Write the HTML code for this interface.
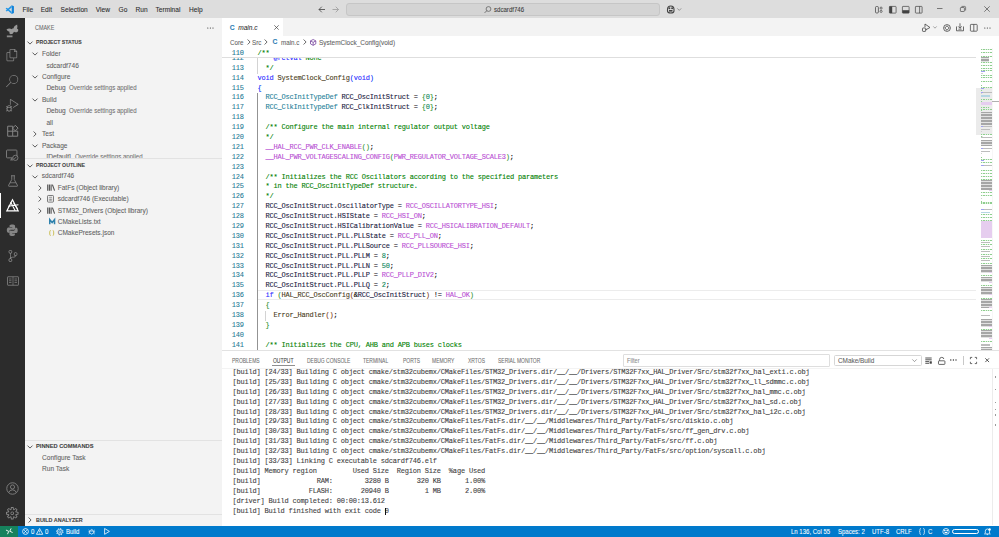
<!DOCTYPE html><html><head><meta charset="utf-8"><style>
html,body{margin:0;padding:0;}
body{width:999px;height:537px;overflow:hidden;position:relative;background:#fff;font-family:"Liberation Sans",sans-serif;}
.t{position:absolute;white-space:pre;-webkit-text-stroke:0.07px currentColor;}
.b{position:absolute;}
svg.b{overflow:visible;}
.code{position:absolute;white-space:pre;font-family:"Liberation Mono",monospace;-webkit-text-stroke:0.1px currentColor;}
</style></head><body>
<div class="b" style="left:0.00px;top:0.00px;width:999.00px;height:18.20px;background:#dddddd"></div>
<svg class="b" style="left:4.60px;top:4.80px;" width="9.40" height="9.20" viewBox="0 0 100 100"><path d="M72 3 L96 14 V86 L72 97 Z" fill="#1182d9"/><path d="M72 3 L72 27 L19 71 L6 63 Z" fill="#1f95e8"/><path d="M72 97 L72 73 L19 29 L6 37 Z" fill="#1f95e8"/></svg>
<div class="t" style="left:22.50px;top:4.00px;font-size:6.6px;line-height:12px;color:#2a2a2a;font-weight:normal;font-family:'Liberation Sans',sans-serif;">File</div>
<div class="t" style="left:40.70px;top:4.00px;font-size:6.6px;line-height:12px;color:#2a2a2a;font-weight:normal;font-family:'Liberation Sans',sans-serif;">Edit</div>
<div class="t" style="left:60.60px;top:4.00px;font-size:6.6px;line-height:12px;color:#2a2a2a;font-weight:normal;font-family:'Liberation Sans',sans-serif;">Selection</div>
<div class="t" style="left:95.80px;top:4.00px;font-size:6.6px;line-height:12px;color:#2a2a2a;font-weight:normal;font-family:'Liberation Sans',sans-serif;">View</div>
<div class="t" style="left:118.50px;top:4.00px;font-size:6.6px;line-height:12px;color:#2a2a2a;font-weight:normal;font-family:'Liberation Sans',sans-serif;">Go</div>
<div class="t" style="left:135.50px;top:4.00px;font-size:6.6px;line-height:12px;color:#2a2a2a;font-weight:normal;font-family:'Liberation Sans',sans-serif;">Run</div>
<div class="t" style="left:155.50px;top:4.00px;font-size:6.6px;line-height:12px;color:#2a2a2a;font-weight:normal;font-family:'Liberation Sans',sans-serif;">Terminal</div>
<div class="t" style="left:189.00px;top:4.00px;font-size:6.6px;line-height:12px;color:#2a2a2a;font-weight:normal;font-family:'Liberation Sans',sans-serif;">Help</div>
<svg class="b" style="left:318.00px;top:6.00px;" width="7.50" height="7.00" viewBox="0 0 7.5 7"><path d="M1 3.5 H7 M3.8 0.7 L1 3.5 L3.8 6.3" stroke="#424242" stroke-width="0.8" fill="none"/></svg>
<svg class="b" style="left:332.00px;top:6.00px;" width="7.50" height="7.00" viewBox="0 0 7.5 7"><path d="M0.5 3.5 H6.5 M3.7 0.7 L6.5 3.5 L3.7 6.3" stroke="#9a9a9a" stroke-width="0.8" fill="none"/></svg>
<div class="b" style="left:346.00px;top:3.10px;width:313.50px;height:12.70px;background:#d4d4d4;border:0.8px solid #c6c6c6;border-radius:3px;box-sizing:border-box"></div>
<svg class="b" style="left:484.00px;top:5.60px;" width="7.50" height="7.50" viewBox="0 0 7.5 7.5"><circle cx="4.5" cy="3" r="2.4" stroke="#555" stroke-width="0.7" fill="none"/><path d="M2.8 4.7 L0.6 6.9" stroke="#555" stroke-width="0.8"/></svg>
<div class="t" style="left:493.50px;top:3.70px;font-size:6.7px;line-height:12px;color:#3b3b3b;font-weight:normal;font-family:'Liberation Sans',sans-serif;transform:scaleX(0.91);transform-origin:0 0;">sdcardf746</div>
<svg class="b" style="left:666.00px;top:5.20px;" width="9.50" height="8.50" viewBox="0 0 9.5 8.5"><path d="M1.5 4.5 Q1.5 1 4.75 1 Q8 1 8 4.5 V6 Q8 8 4.75 8 Q1.5 8 1.5 6 Z" fill="none" stroke="#424242" stroke-width="1.1"/><circle cx="3.4" cy="3.2" r="1" fill="#424242"/><circle cx="6.1" cy="3.2" r="1" fill="#424242"/><rect x="3" y="5" width="3.5" height="1.6" fill="#424242"/></svg>
<svg class="b" style="left:677.00px;top:8.00px;" width="4.50" height="3.00" viewBox="0 0 4.5 3"><path d="M0.3 0.4 L2.25 2.4 L4.2 0.4" stroke="#616161" stroke-width="0.6" fill="none"/></svg>
<svg class="b" style="left:875.20px;top:5.90px;" width="7.80" height="7.50" viewBox="0 0 7.8 7.5"><rect x="0.5" y="0.5" width="2.9" height="6.5" rx="1" fill="none" stroke="#424242" stroke-width="0.75"/><circle cx="6.1" cy="2.1" r="1.05" fill="none" stroke="#424242" stroke-width="0.7"/><circle cx="6.1" cy="5.4" r="1.05" fill="none" stroke="#424242" stroke-width="0.7"/></svg>
<svg class="b" style="left:888.70px;top:5.90px;" width="7.50" height="7.50" viewBox="0 0 7.5 7.5"><rect x="0.4" y="0.4" width="6.7" height="6.7" rx="0.6" fill="none" stroke="#424242" stroke-width="0.7"/><rect x="0.4" y="0.4" width="2.8" height="6.7" fill="#424242"/></svg>
<svg class="b" style="left:902.00px;top:5.90px;" width="7.50" height="7.50" viewBox="0 0 7.5 7.5"><rect x="0.4" y="0.4" width="6.7" height="6.7" rx="0.6" fill="none" stroke="#424242" stroke-width="0.7"/><rect x="0.4" y="4.2" width="6.7" height="2.9" fill="#424242"/></svg>
<svg class="b" style="left:915.40px;top:5.90px;" width="7.50" height="7.50" viewBox="0 0 7.5 7.5"><rect x="0.4" y="0.4" width="6.7" height="6.7" rx="0.6" fill="none" stroke="#424242" stroke-width="0.7"/><path d="M4.6 0.4 V7.1" stroke="#424242" stroke-width="0.7"/></svg>
<svg class="b" style="left:936.50px;top:7.80px;" width="5.50" height="1.00" viewBox="0 0 5.5 1"><path d="M0 0.5 H5.5" stroke="#333" stroke-width="0.6"/></svg>
<svg class="b" style="left:959.70px;top:6.30px;" width="6.00" height="6.00" viewBox="0 0 6 6"><rect x="0.4" y="1.5" width="4" height="4" rx="0.6" fill="none" stroke="#333" stroke-width="0.6"/><path d="M1.5 0.4 H4.6 Q5.6 0.4 5.6 1.4 V4.5" fill="none" stroke="#333" stroke-width="0.6"/></svg>
<svg class="b" style="left:984.30px;top:6.20px;" width="6.00" height="6.00" viewBox="0 0 6 6"><path d="M0.3 0.3 L5.7 5.7 M5.7 0.3 L0.3 5.7" stroke="#333" stroke-width="0.6"/></svg>
<div class="b" style="left:0.00px;top:18.20px;width:25.00px;height:508.00px;background:#2c2c2c"></div>
<svg class="b" style="left:6.20px;top:23.50px;" width="13.50" height="14.50" viewBox="0 0 24 24"><g transform="rotate(-22 12 10)"><path d="M2 5 Q7 3.5 11.5 8 L12.5 6.5 L13.5 8 Q17.5 3 23 3.5 Q22.5 8 20 10 Q23 12.5 19.5 15.5 Q16 17 13 13.5 Q9.5 17 6 15.5 Q3 13.5 5.5 10.5 Q2.5 8.5 2 5Z" fill="#9a9a9a"/></g><rect x="1.5" y="19.5" width="10" height="3.2" fill="#8a8a8a"/></svg>
<svg class="b" style="left:6.40px;top:49.40px;" width="12.20" height="12.20" viewBox="0 0 24 24"><path fill-rule="evenodd" d="M17.5 0h-9L7 1.5V6H2.5L1 7.5v15.07L2.5 24h12.07L16 22.57V18h4.7l1.3-1.43V4.5L17.5 0zm0 2.12l2.38 2.38H17.5V2.12zm-3 20.38h-12v-15H7v9.07L8.5 18h6v4.5zm6-6h-12v-15H16V6h4.5v10.5z" fill="#858585"/></svg>
<svg class="b" style="left:6.40px;top:75.10px;" width="12.20" height="12.20" viewBox="0 0 24 24"><path fill-rule="evenodd" d="M15.25 0a8.75 8.75 0 0 0-6.64 14.444L0 23.05 1.06 24l8.59-8.616A8.75 8.75 0 1 0 15.25 0zm0 16.111a7.361 7.361 0 1 1 7.361-7.36 7.37 7.37 0 0 1-7.361 7.36z" fill="#858585"/></svg>
<svg class="b" style="left:6.25px;top:99.25px;" width="12.50" height="12.50" viewBox="0 0 24 24"><path fill-rule="evenodd" d="M10.94 13.5l-1.32 1.32a3.73 3.73 0 0 0-7.24 0L1.06 13.5 0 14.56l1.72 1.72-.22.22V18H0v1.5h1.5v.08c.077.489.214.966.41 1.42L0 22.94 1.06 24l1.650-1.65A4.308 4.308 0 0 0 6 24a4.31 4.31 0 0 0 3.29-1.65L10.94 24 12 22.94 10.09 21c.198-.464.336-.951.41-1.45v-.1H12V18h-1.5v-1.5l-.22-.22L12 14.560l-1.06-1.060zM6 13.5a2.25 2.25 0 0 1 2.25 2.25h-4.5A2.25 2.25 0 0 1 6 13.5zm3 6a3.33 3.33 0 0 1-3 3 3.33 3.33 0 0 1-3-3v-2.25h6v2.25zm14.76-9.9v1.26L13.5 17.37V15.6l8.5-5.37L9 2v9.46a5.07 5.07 0 0 0-1.5-.72V.63L8.64 0l15.12 9.6z" fill="#858585"/></svg>
<svg class="b" style="left:6.00px;top:123.00px;" width="14.00" height="15.00" viewBox="0 0 14 15"><path d="M1.7 3.2 H6.7 V13.2 H1.7 Z M1.7 8.2 H11.7 V13.2 H6.7" fill="none" stroke="#858585" stroke-width="1"/><path d="M9.3 1.7 L12.1 4.5 L9.3 7.3 L6.5 4.5 Z" transform="translate(0,0.6)" fill="none" stroke="#858585" stroke-width="1"/></svg>
<svg class="b" style="left:6.25px;top:149.25px;" width="12.50" height="12.50" viewBox="0 0 24 24"><rect x="1" y="2" width="20" height="15" rx="1.5" fill="none" stroke="#858585" stroke-width="1.7"/><path d="M8 21 H14 M11 17 V21" stroke="#858585" stroke-width="1.7"/><circle cx="18" cy="17" r="5" fill="#2c2c2c" stroke="#858585" stroke-width="1.6"/><path d="M15.8 19.2 L20.2 14.8" stroke="#858585" stroke-width="1.5"/></svg>
<svg class="b" style="left:6.50px;top:174.50px;" width="12.00" height="12.00" viewBox="0 0 24 24"><path d="M8 1.5 H16 M9.5 1.5 V9 L3 21 Q2.5 22.5 4 22.5 H20 Q21.5 22.5 21 21 L14.5 9 V1.5" fill="none" stroke="#858585" stroke-width="1.7"/><path d="M6 15.5 H18" stroke="#858585" stroke-width="1.5"/></svg>
<svg class="b" style="left:6.00px;top:199.00px;" width="13.00" height="13.00" viewBox="0 0 24 24"><path d="M12 1.5 L1.5 22 H22.5 Z" fill="none" stroke="#ffffff" stroke-width="2.2"/><path d="M4 13.5 L23 10.5 M8.5 5.5 L17 21.5 M14 8 L21.5 18" stroke="#ffffff" stroke-width="2"/></svg>
<svg class="b" style="left:6.25px;top:224.25px;" width="12.50" height="12.50" viewBox="0 0 24 24"><path d="M11.8 1C6.5 1 6.9 3.3 6.9 3.3V5.7H12V6.5H4.9C4.9 6.5 1.5 6.1 1.5 11.5C1.5 16.9 4.4 16.7 4.4 16.7H6.4V14.2C6.4 14.2 6.3 11.2 9.4 11.2H14.5C14.5 11.5 17.4 11.3 17.4 8.6V3.9C17.4 3.9 17.800 1 11.8 1Z M12.2 23C17.5 23 17.1 20.7 17.1 20.7V18.3H12V17.5H19.1C19.1 17.5 22.5 17.9 22.5 12.5C22.5 7.1 19.6 7.3 19.6 7.3H17.6V9.8C17.6 9.8 17.7 12.8 14.6 12.8H9.5C9.5 12.5 6.6 12.700 6.6 15.4V20.1C6.6 20.1 6.2 23 12.2 23Z" fill="#858585"/></svg>
<svg class="b" style="left:6.50px;top:249.50px;" width="12.00" height="12.00" viewBox="0 0 24 24"><path fill-rule="evenodd" d="M21.007 8.222A3.738 3.738 0 0 0 15.045 5.2a3.737 3.737 0 0 0 1.156 6.583 2.988 2.988 0 0 1-2.668 1.67h-2.99a4.456 4.456 0 0 0-2.989 1.165V7.4a3.737 3.737 0 1 0-1.494 0v9.117a3.776 3.776 0 1 0 1.816.099 2.99 2.99 0 0 1 2.668-1.667h2.99a4.484 4.484 0 0 0 4.223-3.039 3.736 3.736 0 0 0 3.25-3.687zM4.565 3.738a2.242 2.242 0 1 1 4.484 0 2.242 2.242 0 0 1-4.484 0zm4.484 16.441a2.242 2.242 0 1 1-4.484 0 2.242 2.242 0 0 1 4.484 0zm8.221-9.715a2.242 2.242 0 1 1 0-4.485 2.242 2.242 0 0 1 0 4.485z" fill="#858585"/></svg>
<svg class="b" style="left:6.50px;top:274.50px;" width="12.00" height="12.00" viewBox="0 0 24 24"><rect x="1" y="3.5" width="22" height="17" rx="1" fill="none" stroke="#858585" stroke-width="1.6"/><path d="M12 3.5 V20.5 M4 8 H9 M4 11.5 H9 M4 15 H9 M15 8 H20 M15 11.5 H20 M15 15 H20" stroke="#858585" stroke-width="1.4"/></svg>
<svg class="b" style="left:6.00px;top:481.50px;" width="13.00" height="13.00" viewBox="0 0 24 24"><circle cx="12" cy="12" r="10.6" fill="none" stroke="#858585" stroke-width="1.6"/><circle cx="12" cy="9.2" r="3.8" fill="none" stroke="#858585" stroke-width="1.6"/><path d="M5 19.5 Q6.5 14.5 12 14.5 Q17.5 14.5 19 19.5" fill="none" stroke="#858585" stroke-width="1.6"/></svg>
<svg class="b" style="left:6.25px;top:506.55px;" width="12.50" height="12.50" viewBox="0 0 24 24"><path fill-rule="evenodd" d="M19.85 8.75l4.15.83v4.84l-4.150.83 2.35 3.520-3.430 3.430-3.520-2.350-.830 4.150H9.580l-.830-4.150-3.520 2.350-3.430-3.430 2.350-3.520L0 14.420V9.580l4.150-.830L1.8 5.230 5.230 1.8l3.520 2.350L9.580 0h4.840l.830 4.150 3.520-2.350 3.430 3.430-2.350 3.520zm-1.57 5.07l4-.81v-2l-4-.81-.54-1.3 2.29-3.43-1.43-1.43-3.43 2.29-1.3-.54-.81-4h-2l-.81 4-1.3.54-3.43-2.29-1.43 1.43L6.38 8.9l-.54 1.3-4 .81v2l4 .81.54 1.3-2.29 3.43 1.43 1.43 3.43-2.29 1.3.54.81 4h2l.81-4 1.3-.54 3.43 2.29 1.43-1.43-2.29-3.43.54-1.3zm-8.186-4.672A3.43 3.43 0 0 1 12 8.57 3.44 3.44 0 0 1 15.43 12a3.43 3.43 0 1 1-5.336-2.852zm.956 4.274c.281.188.612.288.95.288A1.7 1.7 0 0 0 13.71 12a1.71 1.71 0 1 0-2.66 1.422z" fill="#858585"/></svg>
<div class="b" style="left:0.00px;top:193.00px;width:1.10px;height:25.00px;background:#ffffff"></div>
<div class="b" style="left:25.00px;top:18.20px;width:196.60px;height:508.00px;background:#f3f3f3"></div>
<div class="t" style="left:35.20px;top:22.50px;font-size:6.3px;line-height:10px;color:#6b6b6b;font-weight:normal;font-family:'Liberation Sans',sans-serif;transform:scaleX(0.86);transform-origin:0 0;">CMAKE</div>
<svg class="b" style="left:206.80px;top:26.60px;" width="6.80" height="2.00" viewBox="0 0 6.800000000000001 2"><circle cx="0.80" cy="1" r="0.62" fill="#333333"/><circle cx="3.40" cy="1" r="0.62" fill="#333333"/><circle cx="6.00" cy="1" r="0.62" fill="#333333"/></svg>
<svg class="b" style="left:27.40px;top:40.50px;" width="6.00" height="4.00" viewBox="0 0 6 4"><path d="M0.5 0.6 L3 3.1 L5.5 0.6" stroke="#555555" stroke-width="0.95" fill="none"/></svg>
<div class="t" style="left:35.50px;top:37.00px;font-size:5.7px;line-height:10px;color:#424242;font-weight:bold;font-family:'Liberation Sans',sans-serif;transform:scaleX(0.908);transform-origin:0 0;">PROJECT STATUS</div>
<svg class="b" style="left:32.20px;top:52.20px;" width="6.00" height="4.00" viewBox="0 0 6 4"><path d="M0.5 0.6 L3 3.1 L5.5 0.6" stroke="#555555" stroke-width="0.95" fill="none"/></svg>
<div class="t" style="left:42.00px;top:48.00px;font-size:6.55px;line-height:12px;color:#616161;font-weight:normal;font-family:'Liberation Sans',sans-serif;">Folder</div>
<div class="t" style="left:46.40px;top:59.50px;font-size:6.55px;line-height:12px;color:#616161;font-weight:normal;font-family:'Liberation Sans',sans-serif;">sdcardf746</div>
<svg class="b" style="left:32.20px;top:75.15px;" width="6.00" height="4.00" viewBox="0 0 6 4"><path d="M0.5 0.6 L3 3.1 L5.5 0.6" stroke="#555555" stroke-width="0.95" fill="none"/></svg>
<div class="t" style="left:42.00px;top:70.95px;font-size:6.55px;line-height:12px;color:#616161;font-weight:normal;font-family:'Liberation Sans',sans-serif;">Configure</div>
<div class="t" style="left:46.40px;top:82.40px;font-size:6.55px;line-height:12px;color:#616161;font-weight:normal;font-family:'Liberation Sans',sans-serif;">Debug</div>
<div class="t" style="left:69.20px;top:82.40px;font-size:6.5px;line-height:12px;color:#717171;font-weight:normal;font-family:'Liberation Sans',sans-serif;transform:scaleX(0.94);transform-origin:0 0;">Override settings applied</div>
<svg class="b" style="left:32.20px;top:98.05px;" width="6.00" height="4.00" viewBox="0 0 6 4"><path d="M0.5 0.6 L3 3.1 L5.5 0.6" stroke="#555555" stroke-width="0.95" fill="none"/></svg>
<div class="t" style="left:42.00px;top:93.85px;font-size:6.55px;line-height:12px;color:#616161;font-weight:normal;font-family:'Liberation Sans',sans-serif;">Build</div>
<div class="t" style="left:46.40px;top:105.30px;font-size:6.55px;line-height:12px;color:#616161;font-weight:normal;font-family:'Liberation Sans',sans-serif;">Debug</div>
<div class="t" style="left:69.20px;top:105.30px;font-size:6.5px;line-height:12px;color:#717171;font-weight:normal;font-family:'Liberation Sans',sans-serif;transform:scaleX(0.94);transform-origin:0 0;">Override settings applied</div>
<div class="t" style="left:46.40px;top:116.75px;font-size:6.55px;line-height:12px;color:#616161;font-weight:normal;font-family:'Liberation Sans',sans-serif;">all</div>
<svg class="b" style="left:33.20px;top:131.00px;" width="4.00" height="6.00" viewBox="0 0 4 6"><path d="M0.6 0.5 L3.1 3 L0.6 5.5" stroke="#555555" stroke-width="0.95" fill="none"/></svg>
<div class="t" style="left:42.00px;top:128.20px;font-size:6.55px;line-height:12px;color:#616161;font-weight:normal;font-family:'Liberation Sans',sans-serif;">Test</div>
<svg class="b" style="left:32.20px;top:143.85px;" width="6.00" height="4.00" viewBox="0 0 6 4"><path d="M0.5 0.6 L3 3.1 L5.5 0.6" stroke="#555555" stroke-width="0.95" fill="none"/></svg>
<div class="t" style="left:42.00px;top:139.65px;font-size:6.55px;line-height:12px;color:#616161;font-weight:normal;font-family:'Liberation Sans',sans-serif;">Package</div>
<div class="t" style="left:46.40px;top:151.10px;font-size:6.55px;line-height:12px;color:#616161;font-weight:normal;font-family:'Liberation Sans',sans-serif;">[Default]</div>
<div class="t" style="left:75.40px;top:151.10px;font-size:6.5px;line-height:12px;color:#717171;font-weight:normal;font-family:'Liberation Sans',sans-serif;transform:scaleX(0.94);transform-origin:0 0;">Override settings applied</div>
<div class="b" style="left:25.00px;top:158.60px;width:196.60px;height:12.00px;background:#f3f3f3"></div>
<div class="b" style="left:25.00px;top:158.30px;width:196.60px;height:0.60px;background:#e2e2e2"></div>
<svg class="b" style="left:27.40px;top:163.50px;" width="6.00" height="4.00" viewBox="0 0 6 4"><path d="M0.5 0.6 L3 3.1 L5.5 0.6" stroke="#555555" stroke-width="0.95" fill="none"/></svg>
<div class="t" style="left:35.50px;top:160.00px;font-size:5.7px;line-height:10px;color:#424242;font-weight:bold;font-family:'Liberation Sans',sans-serif;transform:scaleX(0.917);transform-origin:0 0;">PROJECT OUTLINE</div>
<svg class="b" style="left:32.20px;top:174.80px;" width="6.00" height="4.00" viewBox="0 0 6 4"><path d="M0.5 0.6 L3 3.1 L5.5 0.6" stroke="#555555" stroke-width="0.95" fill="none"/></svg>
<div class="t" style="left:41.80px;top:170.30px;font-size:6.55px;line-height:12px;color:#616161;font-weight:normal;font-family:'Liberation Sans',sans-serif;">sdcardf746</div>
<svg class="b" style="left:37.60px;top:184.70px;" width="4.00" height="6.00" viewBox="0 0 4 6"><path d="M0.6 0.5 L3.1 3 L0.6 5.5" stroke="#555555" stroke-width="0.95" fill="none"/></svg>
<svg class="b" style="left:46.60px;top:184.00px;" width="8.00" height="7.20" viewBox="0 0 8 7.2"><path d="M0.7 0.5 V6.7 M2.4 0.5 V6.7 M4.1 0.5 V6.7 M5.4 0.6 L7.6 6.6" stroke="#555555" stroke-width="1.15" fill="none"/></svg>
<div class="t" style="left:57.70px;top:181.60px;font-size:6.55px;line-height:12px;color:#616161;font-weight:normal;font-family:'Liberation Sans',sans-serif;">FatFs (Object library)</div>
<svg class="b" style="left:37.60px;top:196.10px;" width="4.00" height="6.00" viewBox="0 0 4 6"><path d="M0.6 0.5 L3.1 3 L0.6 5.5" stroke="#555555" stroke-width="0.95" fill="none"/></svg>
<svg class="b" style="left:46.80px;top:195.20px;" width="7.00" height="7.60" viewBox="0 0 7 7.6"><rect x="0.5" y="0.5" width="6" height="6.6" rx="0.8" fill="none" stroke="#5a5a5a" stroke-width="0.8"/><path d="M1.9 2.3 H5.1 M2.3 3.6 V5.8 M3.5 3.6 V5.8 M4.7 3.6 V5.8" stroke="#5a5a5a" stroke-width="0.6"/></svg>
<div class="t" style="left:57.70px;top:193.00px;font-size:6.55px;line-height:12px;color:#616161;font-weight:normal;font-family:'Liberation Sans',sans-serif;">sdcardf746 (Executable)</div>
<svg class="b" style="left:37.60px;top:207.60px;" width="4.00" height="6.00" viewBox="0 0 4 6"><path d="M0.6 0.5 L3.1 3 L0.6 5.5" stroke="#555555" stroke-width="0.95" fill="none"/></svg>
<svg class="b" style="left:46.60px;top:206.90px;" width="8.00" height="7.20" viewBox="0 0 8 7.2"><path d="M0.7 0.5 V6.7 M2.4 0.5 V6.7 M4.1 0.5 V6.7 M5.4 0.6 L7.6 6.6" stroke="#555555" stroke-width="1.15" fill="none"/></svg>
<div class="t" style="left:57.70px;top:204.50px;font-size:6.55px;line-height:12px;color:#616161;font-weight:normal;font-family:'Liberation Sans',sans-serif;">STM32_Drivers (Object library)</div>
<svg class="b" style="left:48.50px;top:218.90px;" width="6.30" height="5.20" viewBox="0 0 6.3 5.2"><path d="M0.75 5.2 V0.7 L3.15 3.6 L5.55 0.7 V5.2" stroke="#2f82ad" stroke-width="1.5" fill="none" stroke-linejoin="miter"/></svg>
<div class="t" style="left:57.70px;top:215.90px;font-size:6.55px;line-height:12px;color:#616161;font-weight:normal;font-family:'Liberation Sans',sans-serif;">CMakeLists.txt</div>
<svg class="b" style="left:48.60px;top:230.10px;" width="5.40" height="6.00" viewBox="0 0 5.4 6"><path d="M1.6 0.5 Q0.8 0.5 0.8 1.5 V2.3 Q0.8 3 0.3 3 Q0.8 3 0.8 3.7 V4.5 Q0.8 5.5 1.6 5.5 M3.8 0.5 Q4.6 0.5 4.6 1.5 V2.3 Q4.6 3 5.1 3 Q4.6 3 4.6 3.7 V4.5 Q4.6 5.5 3.8 5.5" fill="none" stroke="#c4b63c" stroke-width="0.9"/></svg>
<div class="t" style="left:57.70px;top:227.40px;font-size:6.55px;line-height:12px;color:#616161;font-weight:normal;font-family:'Liberation Sans',sans-serif;">CMakePresets.json</div>
<div class="b" style="left:25.00px;top:440.00px;width:196.60px;height:0.60px;background:#e2e2e2"></div>
<svg class="b" style="left:27.40px;top:444.80px;" width="6.00" height="4.00" viewBox="0 0 6 4"><path d="M0.5 0.6 L3 3.1 L5.5 0.6" stroke="#555555" stroke-width="0.95" fill="none"/></svg>
<div class="t" style="left:35.50px;top:441.30px;font-size:5.7px;line-height:10px;color:#424242;font-weight:bold;font-family:'Liberation Sans',sans-serif;transform:scaleX(1.005);transform-origin:0 0;">PINNED COMMANDS</div>
<div class="t" style="left:42.10px;top:451.70px;font-size:6.55px;line-height:12px;color:#616161;font-weight:normal;font-family:'Liberation Sans',sans-serif;">Configure Task</div>
<div class="t" style="left:42.10px;top:463.00px;font-size:6.55px;line-height:12px;color:#616161;font-weight:normal;font-family:'Liberation Sans',sans-serif;">Run Task</div>
<div class="b" style="left:25.00px;top:514.00px;width:196.60px;height:0.60px;background:#e2e2e2"></div>
<svg class="b" style="left:28.40px;top:516.90px;" width="4.00" height="6.00" viewBox="0 0 4 6"><path d="M0.6 0.5 L3.1 3 L0.6 5.5" stroke="#555555" stroke-width="0.95" fill="none"/></svg>
<div class="t" style="left:35.50px;top:514.80px;font-size:5.7px;line-height:10px;color:#424242;font-weight:bold;font-family:'Liberation Sans',sans-serif;transform:scaleX(0.951);transform-origin:0 0;">BUILD ANALYZER</div>
<div class="b" style="left:221.60px;top:18.20px;width:777.40px;height:18.20px;background:#f3f3f3"></div>
<div class="b" style="left:221.60px;top:18.20px;width:61.70px;height:18.20px;background:#ffffff"></div>
<div class="t" style="left:229.80px;top:22.60px;font-size:6.8px;line-height:10px;color:#2f80b5;font-weight:bold;font-family:'Liberation Sans',sans-serif;">C</div>
<div class="t" style="left:238.20px;top:22.70px;font-size:6.55px;line-height:10px;color:#333333;font-weight:normal;font-family:'Liberation Sans',sans-serif;font-style:italic">main.c</div>
<svg class="b" style="left:273.90px;top:25.10px;" width="5.00" height="5.00" viewBox="0 0 5 5"><path d="M0.3 0.3 L4.7 4.7 M4.7 0.3 L0.3 4.7" stroke="#424242" stroke-width="0.7"/></svg>
<svg class="b" style="left:921.80px;top:22.80px;" width="8.60" height="9.00" viewBox="0 0 8.6 9"><path d="M3 1 L8 4.5 L3.5 7" fill="none" stroke="#424242" stroke-width="0.8"/><path d="M3 1 V4" stroke="#424242" stroke-width="0.8"/><rect x="0.5" y="5" width="3.2" height="3.4" rx="0.6" fill="none" stroke="#424242" stroke-width="0.8"/></svg>
<svg class="b" style="left:933.00px;top:26.00px;" width="4.00" height="2.80" viewBox="0 0 4 2.8"><path d="M0.3 0.4 L2 2.2 L3.7 0.4" stroke="#616161" stroke-width="0.55" fill="none"/></svg>
<svg class="b" style="left:942.60px;top:23.50px;" width="8.00" height="8.00" viewBox="0 0 8 8"><circle cx="4" cy="4" r="3.4" fill="none" stroke="#424242" stroke-width="0.8"/><path d="M4 1.8 L6.2 4 L4 6.2 L1.8 4 Z" fill="none" stroke="#424242" stroke-width="0.8"/></svg>
<svg class="b" style="left:956.00px;top:23.20px;" width="8.00" height="8.40" viewBox="0 0 8 8.4"><path d="M0.5 3.5 V7.8 H7.5 V3.5" fill="none" stroke="#424242" stroke-width="0.8"/><path d="M4 0.3 V5.2 M2.2 3.4 L4 5.2 L5.8 3.4" fill="none" stroke="#424242" stroke-width="0.8"/><path d="M2.4 6.2 H5.6" stroke="#424242" stroke-width="0.7"/></svg>
<svg class="b" style="left:969.90px;top:23.60px;" width="7.60" height="7.60" viewBox="0 0 7.6 7.6"><rect x="0.4" y="0.4" width="6.8" height="6.8" rx="0.7" fill="none" stroke="#424242" stroke-width="0.75"/><path d="M3.8 0.4 V7.2" stroke="#424242" stroke-width="0.75"/></svg>
<svg class="b" style="left:983.60px;top:26.60px;" width="6.80" height="2.00" viewBox="0 0 6.800000000000001 2"><circle cx="0.80" cy="1" r="0.62" fill="#333333"/><circle cx="3.40" cy="1" r="0.62" fill="#333333"/><circle cx="6.00" cy="1" r="0.62" fill="#333333"/></svg>
<div class="t" style="left:230.10px;top:37.60px;font-size:6.7px;line-height:10px;color:#616161;font-weight:normal;font-family:'Liberation Sans',sans-serif;transform:scaleX(0.93);transform-origin:0 0;">Core</div>
<svg class="b" style="left:246.50px;top:39.40px;" width="4.00" height="6.00" viewBox="0 0 4 6"><path d="M0.6 0.5 L3.1 3 L0.6 5.5" stroke="#616161" stroke-width="0.95" fill="none"/></svg>
<div class="t" style="left:252.30px;top:37.60px;font-size:6.7px;line-height:10px;color:#616161;font-weight:normal;font-family:'Liberation Sans',sans-serif;transform:scaleX(0.93);transform-origin:0 0;">Src</div>
<svg class="b" style="left:264.10px;top:39.40px;" width="4.00" height="6.00" viewBox="0 0 4 6"><path d="M0.6 0.5 L3.1 3 L0.6 5.5" stroke="#616161" stroke-width="0.95" fill="none"/></svg>
<div class="t" style="left:272.60px;top:37.20px;font-size:6.8px;line-height:10px;color:#2f80b5;font-weight:bold;font-family:'Liberation Sans',sans-serif;">C</div>
<div class="t" style="left:281.10px;top:37.60px;font-size:6.7px;line-height:10px;color:#616161;font-weight:normal;font-family:'Liberation Sans',sans-serif;transform:scaleX(0.93);transform-origin:0 0;">main.c</div>
<svg class="b" style="left:303.40px;top:39.40px;" width="4.00" height="6.00" viewBox="0 0 4 6"><path d="M0.6 0.5 L3.1 3 L0.6 5.5" stroke="#616161" stroke-width="0.95" fill="none"/></svg>
<svg class="b" style="left:309.90px;top:38.90px;" width="6.30" height="6.80" viewBox="0 0 6.3 6.8"><path d="M3.15 0.5 L5.8 1.9 V4.9 L3.15 6.3 L0.5 4.9 V1.9 Z M0.5 1.9 L3.15 3.3 L5.8 1.9 M3.15 3.3 V6.3" fill="none" stroke="#652d90" stroke-width="0.7"/></svg>
<div class="t" style="left:318.90px;top:37.60px;font-size:6.7px;line-height:10px;color:#616161;font-weight:normal;font-family:'Liberation Sans',sans-serif;transform:scaleX(0.965);transform-origin:0 0;">SystemClock_Config(void)</div>
<div class="b" style="left:221.6px;top:47.9px;width:777.4px;height:302.5px;overflow:hidden;background:#fff">
<div class="b" style="left:35.90px;top:242.58px;width:718.50px;height:9.30px;border-top:0.9px solid #ececec;border-bottom:0.9px solid #ececec;box-sizing:border-box"></div>
<div class="b" style="left:35.70px;top:5.90px;width:0.60px;height:19.89px;background:#d3d3d3"></div>
<div class="b" style="left:35.70px;top:45.56px;width:0.60px;height:257.04px;background:#939393"></div>
<div class="b" style="left:43.70px;top:263.05px;width:0.60px;height:9.89px;background:#d3d3d3"></div>
<div class="code" style="left:0;top:-3.87px;width:22.20px;text-align:right;font-size:7px;line-height:9.886px;color:#237893;letter-spacing:-0.19px;-webkit-text-stroke:0.06px #237893">111</div>
<div class="code" style="left:0;top:6.01px;width:22.20px;text-align:right;font-size:7px;line-height:9.886px;color:#237893;letter-spacing:-0.19px;-webkit-text-stroke:0.06px #237893">112</div>
<div class="code" style="left:43.91px;top:6.01px;font-size:7px;line-height:9.886px;color:#008000;letter-spacing:-0.194px">*</div>
<div class="code" style="left:51.92px;top:6.01px;font-size:7px;line-height:9.886px;color:#2a2aff;letter-spacing:-0.194px">@retval</div>
<div class="code" style="left:83.97px;top:6.01px;font-size:7px;line-height:9.886px;color:#008000;letter-spacing:-0.194px">None</div>
<div class="code" style="left:0;top:15.90px;width:22.20px;text-align:right;font-size:7px;line-height:9.886px;color:#237893;letter-spacing:-0.19px;-webkit-text-stroke:0.06px #237893">113</div>
<div class="code" style="left:43.91px;top:15.90px;font-size:7px;line-height:9.886px;color:#008000;letter-spacing:-0.194px">*/</div>
<div class="code" style="left:0;top:25.79px;width:22.20px;text-align:right;font-size:7px;line-height:9.886px;color:#237893;letter-spacing:-0.19px;-webkit-text-stroke:0.06px #237893">114</div>
<div class="code" style="left:35.90px;top:25.79px;font-size:7px;line-height:9.886px;color:#2a2aff;letter-spacing:-0.194px">void</div>
<div class="code" style="left:55.93px;top:25.79px;font-size:7px;line-height:9.886px;color:#4a3c1a;letter-spacing:-0.194px">SystemClock_Config</div>
<div class="code" style="left:128.04px;top:25.79px;font-size:7px;line-height:9.886px;color:#0431fa;letter-spacing:-0.194px">(</div>
<div class="code" style="left:132.04px;top:25.79px;font-size:7px;line-height:9.886px;color:#2a2aff;letter-spacing:-0.194px">void</div>
<div class="code" style="left:148.07px;top:25.79px;font-size:7px;line-height:9.886px;color:#0431fa;letter-spacing:-0.194px">)</div>
<div class="code" style="left:0;top:35.67px;width:22.20px;text-align:right;font-size:7px;line-height:9.886px;color:#237893;letter-spacing:-0.19px;-webkit-text-stroke:0.06px #237893">115</div>
<div class="code" style="left:35.90px;top:35.67px;font-size:7px;line-height:9.886px;color:#0431fa;letter-spacing:-0.194px">{</div>
<div class="code" style="left:0;top:45.56px;width:22.20px;text-align:right;font-size:7px;line-height:9.886px;color:#237893;letter-spacing:-0.19px;-webkit-text-stroke:0.06px #237893">116</div>
<div class="code" style="left:43.91px;top:45.56px;font-size:7px;line-height:9.886px;color:#267f99;letter-spacing:-0.194px">RCC_OscInitTypeDef</div>
<div class="code" style="left:120.03px;top:45.56px;font-size:7px;line-height:9.886px;color:#1a1a40;letter-spacing:-0.194px">RCC_OscInitStruct</div>
<div class="code" style="left:192.13px;top:45.56px;font-size:7px;line-height:9.886px;color:#000000;letter-spacing:-0.194px">=</div>
<div class="code" style="left:200.15px;top:45.56px;font-size:7px;line-height:9.886px;color:#319331;letter-spacing:-0.194px">{</div>
<div class="code" style="left:204.15px;top:45.56px;font-size:7px;line-height:9.886px;color:#098658;letter-spacing:-0.194px">0</div>
<div class="code" style="left:208.16px;top:45.56px;font-size:7px;line-height:9.886px;color:#319331;letter-spacing:-0.194px">}</div>
<div class="code" style="left:212.16px;top:45.56px;font-size:7px;line-height:9.886px;color:#000000;letter-spacing:-0.194px">;</div>
<div class="code" style="left:0;top:55.44px;width:22.20px;text-align:right;font-size:7px;line-height:9.886px;color:#237893;letter-spacing:-0.19px;-webkit-text-stroke:0.06px #237893">117</div>
<div class="code" style="left:43.91px;top:55.44px;font-size:7px;line-height:9.886px;color:#267f99;letter-spacing:-0.194px">RCC_ClkInitTypeDef</div>
<div class="code" style="left:120.03px;top:55.44px;font-size:7px;line-height:9.886px;color:#1a1a40;letter-spacing:-0.194px">RCC_ClkInitStruct</div>
<div class="code" style="left:192.13px;top:55.44px;font-size:7px;line-height:9.886px;color:#000000;letter-spacing:-0.194px">=</div>
<div class="code" style="left:200.15px;top:55.44px;font-size:7px;line-height:9.886px;color:#319331;letter-spacing:-0.194px">{</div>
<div class="code" style="left:204.15px;top:55.44px;font-size:7px;line-height:9.886px;color:#098658;letter-spacing:-0.194px">0</div>
<div class="code" style="left:208.16px;top:55.44px;font-size:7px;line-height:9.886px;color:#319331;letter-spacing:-0.194px">}</div>
<div class="code" style="left:212.16px;top:55.44px;font-size:7px;line-height:9.886px;color:#000000;letter-spacing:-0.194px">;</div>
<div class="code" style="left:0;top:65.33px;width:22.20px;text-align:right;font-size:7px;line-height:9.886px;color:#237893;letter-spacing:-0.19px;-webkit-text-stroke:0.06px #237893">118</div>
<div class="code" style="left:0;top:75.22px;width:22.20px;text-align:right;font-size:7px;line-height:9.886px;color:#237893;letter-spacing:-0.19px;-webkit-text-stroke:0.06px #237893">119</div>
<div class="code" style="left:43.91px;top:75.22px;font-size:7px;line-height:9.886px;color:#008000;letter-spacing:-0.194px">/** Configure the main internal regulator output voltage</div>
<div class="code" style="left:0;top:85.10px;width:22.20px;text-align:right;font-size:7px;line-height:9.886px;color:#237893;letter-spacing:-0.19px;-webkit-text-stroke:0.06px #237893">120</div>
<div class="code" style="left:43.91px;top:85.10px;font-size:7px;line-height:9.886px;color:#008000;letter-spacing:-0.194px">*/</div>
<div class="code" style="left:0;top:94.99px;width:22.20px;text-align:right;font-size:7px;line-height:9.886px;color:#237893;letter-spacing:-0.19px;-webkit-text-stroke:0.06px #237893">121</div>
<div class="code" style="left:43.91px;top:94.99px;font-size:7px;line-height:9.886px;color:#b94fd4;letter-spacing:-0.194px">__HAL_RCC_PWR_CLK_ENABLE</div>
<div class="code" style="left:140.06px;top:94.99px;font-size:7px;line-height:9.886px;color:#319331;letter-spacing:-0.194px">()</div>
<div class="code" style="left:148.07px;top:94.99px;font-size:7px;line-height:9.886px;color:#000000;letter-spacing:-0.194px">;</div>
<div class="code" style="left:0;top:104.87px;width:22.20px;text-align:right;font-size:7px;line-height:9.886px;color:#237893;letter-spacing:-0.19px;-webkit-text-stroke:0.06px #237893">122</div>
<div class="code" style="left:43.91px;top:104.87px;font-size:7px;line-height:9.886px;color:#b94fd4;letter-spacing:-0.194px">__HAL_PWR_VOLTAGESCALING_CONFIG</div>
<div class="code" style="left:168.10px;top:104.87px;font-size:7px;line-height:9.886px;color:#319331;letter-spacing:-0.194px">(</div>
<div class="code" style="left:172.10px;top:104.87px;font-size:7px;line-height:9.886px;color:#b94fd4;letter-spacing:-0.194px">PWR_REGULATOR_VOLTAGE_SCALE3</div>
<div class="code" style="left:284.27px;top:104.87px;font-size:7px;line-height:9.886px;color:#319331;letter-spacing:-0.194px">)</div>
<div class="code" style="left:288.28px;top:104.87px;font-size:7px;line-height:9.886px;color:#000000;letter-spacing:-0.194px">;</div>
<div class="code" style="left:0;top:114.76px;width:22.20px;text-align:right;font-size:7px;line-height:9.886px;color:#237893;letter-spacing:-0.19px;-webkit-text-stroke:0.06px #237893">123</div>
<div class="code" style="left:0;top:124.65px;width:22.20px;text-align:right;font-size:7px;line-height:9.886px;color:#237893;letter-spacing:-0.19px;-webkit-text-stroke:0.06px #237893">124</div>
<div class="code" style="left:43.91px;top:124.65px;font-size:7px;line-height:9.886px;color:#008000;letter-spacing:-0.194px">/** Initializes the RCC Oscillators according to the specified parameters</div>
<div class="code" style="left:0;top:134.53px;width:22.20px;text-align:right;font-size:7px;line-height:9.886px;color:#237893;letter-spacing:-0.19px;-webkit-text-stroke:0.06px #237893">125</div>
<div class="code" style="left:43.91px;top:134.53px;font-size:7px;line-height:9.886px;color:#008000;letter-spacing:-0.194px">* in the RCC_OscInitTypeDef structure.</div>
<div class="code" style="left:0;top:144.42px;width:22.20px;text-align:right;font-size:7px;line-height:9.886px;color:#237893;letter-spacing:-0.19px;-webkit-text-stroke:0.06px #237893">126</div>
<div class="code" style="left:43.91px;top:144.42px;font-size:7px;line-height:9.886px;color:#008000;letter-spacing:-0.194px">*/</div>
<div class="code" style="left:0;top:154.30px;width:22.20px;text-align:right;font-size:7px;line-height:9.886px;color:#237893;letter-spacing:-0.19px;-webkit-text-stroke:0.06px #237893">127</div>
<div class="code" style="left:43.91px;top:154.30px;font-size:7px;line-height:9.886px;color:#1a1a40;letter-spacing:-0.194px">RCC_OscInitStruct.OscillatorType</div>
<div class="code" style="left:176.11px;top:154.30px;font-size:7px;line-height:9.886px;color:#000000;letter-spacing:-0.194px">=</div>
<div class="code" style="left:184.12px;top:154.30px;font-size:7px;line-height:9.886px;color:#b94fd4;letter-spacing:-0.194px">RCC_OSCILLATORTYPE_HSI</div>
<div class="code" style="left:272.25px;top:154.30px;font-size:7px;line-height:9.886px;color:#000000;letter-spacing:-0.194px">;</div>
<div class="code" style="left:0;top:164.19px;width:22.20px;text-align:right;font-size:7px;line-height:9.886px;color:#237893;letter-spacing:-0.19px;-webkit-text-stroke:0.06px #237893">128</div>
<div class="code" style="left:43.91px;top:164.19px;font-size:7px;line-height:9.886px;color:#1a1a40;letter-spacing:-0.194px">RCC_OscInitStruct.HSIState</div>
<div class="code" style="left:152.07px;top:164.19px;font-size:7px;line-height:9.886px;color:#000000;letter-spacing:-0.194px">=</div>
<div class="code" style="left:160.09px;top:164.19px;font-size:7px;line-height:9.886px;color:#b94fd4;letter-spacing:-0.194px">RCC_HSI_ON</div>
<div class="code" style="left:200.15px;top:164.19px;font-size:7px;line-height:9.886px;color:#000000;letter-spacing:-0.194px">;</div>
<div class="code" style="left:0;top:174.08px;width:22.20px;text-align:right;font-size:7px;line-height:9.886px;color:#237893;letter-spacing:-0.19px;-webkit-text-stroke:0.06px #237893">129</div>
<div class="code" style="left:43.91px;top:174.08px;font-size:7px;line-height:9.886px;color:#1a1a40;letter-spacing:-0.194px">RCC_OscInitStruct.HSICalibrationValue</div>
<div class="code" style="left:196.14px;top:174.08px;font-size:7px;line-height:9.886px;color:#000000;letter-spacing:-0.194px">=</div>
<div class="code" style="left:204.15px;top:174.08px;font-size:7px;line-height:9.886px;color:#b94fd4;letter-spacing:-0.194px">RCC_HSICALIBRATION_DEFAULT</div>
<div class="code" style="left:308.31px;top:174.08px;font-size:7px;line-height:9.886px;color:#000000;letter-spacing:-0.194px">;</div>
<div class="code" style="left:0;top:183.96px;width:22.20px;text-align:right;font-size:7px;line-height:9.886px;color:#237893;letter-spacing:-0.19px;-webkit-text-stroke:0.06px #237893">130</div>
<div class="code" style="left:43.91px;top:183.96px;font-size:7px;line-height:9.886px;color:#1a1a40;letter-spacing:-0.194px">RCC_OscInitStruct.PLL.PLLState</div>
<div class="code" style="left:168.10px;top:183.96px;font-size:7px;line-height:9.886px;color:#000000;letter-spacing:-0.194px">=</div>
<div class="code" style="left:176.11px;top:183.96px;font-size:7px;line-height:9.886px;color:#b94fd4;letter-spacing:-0.194px">RCC_PLL_ON</div>
<div class="code" style="left:216.17px;top:183.96px;font-size:7px;line-height:9.886px;color:#000000;letter-spacing:-0.194px">;</div>
<div class="code" style="left:0;top:193.85px;width:22.20px;text-align:right;font-size:7px;line-height:9.886px;color:#237893;letter-spacing:-0.19px;-webkit-text-stroke:0.06px #237893">131</div>
<div class="code" style="left:43.91px;top:193.85px;font-size:7px;line-height:9.886px;color:#1a1a40;letter-spacing:-0.194px">RCC_OscInitStruct.PLL.PLLSource</div>
<div class="code" style="left:172.10px;top:193.85px;font-size:7px;line-height:9.886px;color:#000000;letter-spacing:-0.194px">=</div>
<div class="code" style="left:180.12px;top:193.85px;font-size:7px;line-height:9.886px;color:#b94fd4;letter-spacing:-0.194px">RCC_PLLSOURCE_HSI</div>
<div class="code" style="left:248.22px;top:193.85px;font-size:7px;line-height:9.886px;color:#000000;letter-spacing:-0.194px">;</div>
<div class="code" style="left:0;top:203.73px;width:22.20px;text-align:right;font-size:7px;line-height:9.886px;color:#237893;letter-spacing:-0.19px;-webkit-text-stroke:0.06px #237893">132</div>
<div class="code" style="left:43.91px;top:203.73px;font-size:7px;line-height:9.886px;color:#1a1a40;letter-spacing:-0.194px">RCC_OscInitStruct.PLL.PLLM</div>
<div class="code" style="left:152.07px;top:203.73px;font-size:7px;line-height:9.886px;color:#000000;letter-spacing:-0.194px">=</div>
<div class="code" style="left:160.09px;top:203.73px;font-size:7px;line-height:9.886px;color:#098658;letter-spacing:-0.194px">8</div>
<div class="code" style="left:164.09px;top:203.73px;font-size:7px;line-height:9.886px;color:#000000;letter-spacing:-0.194px">;</div>
<div class="code" style="left:0;top:213.62px;width:22.20px;text-align:right;font-size:7px;line-height:9.886px;color:#237893;letter-spacing:-0.19px;-webkit-text-stroke:0.06px #237893">133</div>
<div class="code" style="left:43.91px;top:213.62px;font-size:7px;line-height:9.886px;color:#1a1a40;letter-spacing:-0.194px">RCC_OscInitStruct.PLL.PLLN</div>
<div class="code" style="left:152.07px;top:213.62px;font-size:7px;line-height:9.886px;color:#000000;letter-spacing:-0.194px">=</div>
<div class="code" style="left:160.09px;top:213.62px;font-size:7px;line-height:9.886px;color:#098658;letter-spacing:-0.194px">50</div>
<div class="code" style="left:168.10px;top:213.62px;font-size:7px;line-height:9.886px;color:#000000;letter-spacing:-0.194px">;</div>
<div class="code" style="left:0;top:223.51px;width:22.20px;text-align:right;font-size:7px;line-height:9.886px;color:#237893;letter-spacing:-0.19px;-webkit-text-stroke:0.06px #237893">134</div>
<div class="code" style="left:43.91px;top:223.51px;font-size:7px;line-height:9.886px;color:#1a1a40;letter-spacing:-0.194px">RCC_OscInitStruct.PLL.PLLP</div>
<div class="code" style="left:152.07px;top:223.51px;font-size:7px;line-height:9.886px;color:#000000;letter-spacing:-0.194px">=</div>
<div class="code" style="left:160.09px;top:223.51px;font-size:7px;line-height:9.886px;color:#b94fd4;letter-spacing:-0.194px">RCC_PLLP_DIV2</div>
<div class="code" style="left:212.16px;top:223.51px;font-size:7px;line-height:9.886px;color:#000000;letter-spacing:-0.194px">;</div>
<div class="code" style="left:0;top:233.39px;width:22.20px;text-align:right;font-size:7px;line-height:9.886px;color:#237893;letter-spacing:-0.19px;-webkit-text-stroke:0.06px #237893">135</div>
<div class="code" style="left:43.91px;top:233.39px;font-size:7px;line-height:9.886px;color:#1a1a40;letter-spacing:-0.194px">RCC_OscInitStruct.PLL.PLLQ</div>
<div class="code" style="left:152.07px;top:233.39px;font-size:7px;line-height:9.886px;color:#000000;letter-spacing:-0.194px">=</div>
<div class="code" style="left:160.09px;top:233.39px;font-size:7px;line-height:9.886px;color:#098658;letter-spacing:-0.194px">2</div>
<div class="code" style="left:164.09px;top:233.39px;font-size:7px;line-height:9.886px;color:#000000;letter-spacing:-0.194px">;</div>
<div class="code" style="left:0;top:243.28px;width:22.20px;text-align:right;font-size:7px;line-height:9.886px;color:#237893;letter-spacing:-0.19px;-webkit-text-stroke:0.06px #237893">136</div>
<div class="code" style="left:43.91px;top:243.28px;font-size:7px;line-height:9.886px;color:#2a2aff;letter-spacing:-0.194px">if</div>
<div class="code" style="left:55.93px;top:243.28px;font-size:7px;line-height:9.886px;color:#319331;letter-spacing:-0.194px">(</div>
<div class="code" style="left:59.94px;top:243.28px;font-size:7px;line-height:9.886px;color:#4a3c1a;letter-spacing:-0.194px">HAL_RCC_OscConfig</div>
<div class="code" style="left:128.04px;top:243.28px;font-size:7px;line-height:9.886px;color:#7b3814;letter-spacing:-0.194px">(</div>
<div class="code" style="left:132.04px;top:243.28px;font-size:7px;line-height:9.886px;color:#000000;letter-spacing:-0.194px">&amp;</div>
<div class="code" style="left:136.05px;top:243.28px;font-size:7px;line-height:9.886px;color:#1a1a40;letter-spacing:-0.194px">RCC_OscInitStruct</div>
<div class="code" style="left:204.15px;top:243.28px;font-size:7px;line-height:9.886px;color:#7b3814;letter-spacing:-0.194px">)</div>
<div class="code" style="left:212.16px;top:243.28px;font-size:7px;line-height:9.886px;color:#000000;letter-spacing:-0.194px">!=</div>
<div class="code" style="left:224.18px;top:243.28px;font-size:7px;line-height:9.886px;color:#b94fd4;letter-spacing:-0.194px">HAL_OK</div>
<div class="code" style="left:248.22px;top:243.28px;font-size:7px;line-height:9.886px;color:#319331;letter-spacing:-0.194px">)</div>
<div class="code" style="left:0;top:253.16px;width:22.20px;text-align:right;font-size:7px;line-height:9.886px;color:#237893;letter-spacing:-0.19px;-webkit-text-stroke:0.06px #237893">137</div>
<div class="code" style="left:43.91px;top:253.16px;font-size:7px;line-height:9.886px;color:#319331;letter-spacing:-0.194px">{</div>
<div class="code" style="left:0;top:263.05px;width:22.20px;text-align:right;font-size:7px;line-height:9.886px;color:#237893;letter-spacing:-0.19px;-webkit-text-stroke:0.06px #237893">138</div>
<div class="code" style="left:51.92px;top:263.05px;font-size:7px;line-height:9.886px;color:#4a3c1a;letter-spacing:-0.194px">Error_Handler</div>
<div class="code" style="left:104.00px;top:263.05px;font-size:7px;line-height:9.886px;color:#7b3814;letter-spacing:-0.194px">()</div>
<div class="code" style="left:112.01px;top:263.05px;font-size:7px;line-height:9.886px;color:#000000;letter-spacing:-0.194px">;</div>
<div class="code" style="left:0;top:272.94px;width:22.20px;text-align:right;font-size:7px;line-height:9.886px;color:#237893;letter-spacing:-0.19px;-webkit-text-stroke:0.06px #237893">139</div>
<div class="code" style="left:43.91px;top:272.94px;font-size:7px;line-height:9.886px;color:#319331;letter-spacing:-0.194px">}</div>
<div class="code" style="left:0;top:282.82px;width:22.20px;text-align:right;font-size:7px;line-height:9.886px;color:#237893;letter-spacing:-0.19px;-webkit-text-stroke:0.06px #237893">140</div>
<div class="code" style="left:0;top:292.71px;width:22.20px;text-align:right;font-size:7px;line-height:9.886px;color:#237893;letter-spacing:-0.19px;-webkit-text-stroke:0.06px #237893">141</div>
<div class="code" style="left:43.91px;top:292.71px;font-size:7px;line-height:9.886px;color:#008000;letter-spacing:-0.194px">/** Initializes the CPU, AHB and APB buses clocks</div>
<div class="b" style="left:0.00px;top:0.00px;width:754.40px;height:9.60px;background:#fff"></div>
<div class="code" style="left:0;top:1.20px;width:22.20px;text-align:right;font-size:7px;line-height:9.886px;color:#237893;letter-spacing:-0.19px">110</div>
<div class="code" style="left:35.90px;top:1.20px;font-size:7px;line-height:9.886px;color:#008000;letter-spacing:-0.194px">/**</div>
<div class="b" style="left:0.00px;top:9.60px;width:754.40px;height:1.00px;background:#dedede"></div>
</div>
<div class="b" style="left:976.00px;top:88.20px;width:16.00px;height:46.60px;background:rgba(100,100,100,0.13)"></div>
<div class="b" style="left:981.00px;top:49.45px;width:10.50px;height:1.05px;background:repeating-linear-gradient(90deg,#8fce8f 0px,#8fce8f 1.5px,#dff0df 1.5px,#dff0df 2.3px)"></div>
<div class="b" style="left:981.00px;top:52.45px;width:10.50px;height:1.05px;background:repeating-linear-gradient(90deg,#8fce8f 0px,#8fce8f 1.5px,#dff0df 1.5px,#dff0df 2.3px)"></div>
<div class="b" style="left:981.00px;top:55.65px;width:10.50px;height:1.05px;background:repeating-linear-gradient(90deg,#8fce8f 0px,#8fce8f 1.5px,#dff0df 1.5px,#dff0df 2.3px)"></div>
<div class="b" style="left:981.00px;top:57.30px;width:8.40px;height:4.30px;background:repeating-linear-gradient(180deg,#a6a6a6 0px,#a6a6a6 1.05px,#e2e2e2 1.05px,#e2e2e2 1.56px)"></div>
<div class="b" style="left:981.00px;top:62.15px;width:10.50px;height:1.05px;background:repeating-linear-gradient(90deg,#8fce8f 0px,#8fce8f 1.5px,#dff0df 1.5px,#dff0df 2.3px)"></div>
<div class="b" style="left:981.00px;top:64.95px;width:10.50px;height:1.05px;background:repeating-linear-gradient(90deg,#8fce8f 0px,#8fce8f 1.5px,#dff0df 1.5px,#dff0df 2.3px)"></div>
<div class="b" style="left:981.00px;top:68.35px;width:10.50px;height:1.05px;background:repeating-linear-gradient(90deg,#8fce8f 0px,#8fce8f 1.5px,#dff0df 1.5px,#dff0df 2.3px)"></div>
<div class="b" style="left:981.00px;top:70.05px;width:10.50px;height:1.05px;background:repeating-linear-gradient(90deg,#8fce8f 0px,#8fce8f 1.5px,#dff0df 1.5px,#dff0df 2.3px)"></div>
<div class="b" style="left:981.00px;top:71.20px;width:3.67px;height:1.30px;background:#a0a0f0"></div>
<div class="b" style="left:981.00px;top:72.90px;width:2.10px;height:0.80px;background:#d0d0d0"></div>
<div class="b" style="left:981.00px;top:74.65px;width:10.50px;height:1.05px;background:repeating-linear-gradient(90deg,#8fce8f 0px,#8fce8f 1.5px,#dff0df 1.5px,#dff0df 2.3px)"></div>
<div class="b" style="left:981.00px;top:77.45px;width:10.50px;height:1.05px;background:repeating-linear-gradient(90deg,#8fce8f 0px,#8fce8f 1.5px,#dff0df 1.5px,#dff0df 2.3px)"></div>
<div class="b" style="left:981.00px;top:81.05px;width:10.50px;height:1.05px;background:repeating-linear-gradient(90deg,#8fce8f 0px,#8fce8f 1.5px,#dff0df 1.5px,#dff0df 2.3px)"></div>
<div class="b" style="left:981.00px;top:84.75px;width:1.05px;height:1.05px;background:repeating-linear-gradient(90deg,#8fce8f 0px,#8fce8f 1.5px,#dff0df 1.5px,#dff0df 2.3px)"></div>
<div class="b" style="left:981.00px;top:87.10px;width:3.67px;height:1.30px;background:#a0a0f0"></div>
<div class="b" style="left:981.00px;top:87.25px;width:10.50px;height:1.05px;background:repeating-linear-gradient(90deg,#8fce8f 0px,#8fce8f 1.5px,#dff0df 1.5px,#dff0df 2.3px)"></div>
<div class="b" style="left:981.00px;top:88.20px;width:3.15px;height:1.20px;background:#a0a0f0"></div>
<div class="b" style="left:981.00px;top:89.95px;width:1.57px;height:1.05px;background:repeating-linear-gradient(90deg,#8fce8f 0px,#8fce8f 1.5px,#dff0df 1.5px,#dff0df 2.3px)"></div>
<div class="b" style="left:981.00px;top:91.60px;width:10.50px;height:1.30px;background:#bdbdbd"></div>
<div class="b" style="left:981.00px;top:91.60px;width:1.57px;height:1.30px;background:#a0a0f0"></div>
<div class="b" style="left:981.00px;top:92.80px;width:1.05px;height:0.80px;background:#d0d0d0"></div>
<div class="b" style="left:981.00px;top:94.70px;width:9.45px;height:2.70px;background:#b5d5e3"></div>
<div class="b" style="left:981.00px;top:99.15px;width:10.50px;height:1.05px;background:repeating-linear-gradient(90deg,#8fce8f 0px,#8fce8f 1.5px,#dff0df 1.5px,#dff0df 2.3px)"></div>
<div class="b" style="left:981.00px;top:101.05px;width:2.10px;height:1.05px;background:repeating-linear-gradient(90deg,#8fce8f 0px,#8fce8f 1.5px,#dff0df 1.5px,#dff0df 2.3px)"></div>
<div class="b" style="left:981.00px;top:102.20px;width:10.50px;height:2.80px;background:#e6cdef"></div>
<div class="b" style="left:981.00px;top:107.15px;width:8.92px;height:1.05px;background:repeating-linear-gradient(90deg,#8fce8f 0px,#8fce8f 1.5px,#dff0df 1.5px,#dff0df 2.3px)"></div>
<div class="b" style="left:981.00px;top:108.85px;width:10.50px;height:1.05px;background:repeating-linear-gradient(90deg,#8fce8f 0px,#8fce8f 1.5px,#dff0df 1.5px,#dff0df 2.3px)"></div>
<div class="b" style="left:981.00px;top:110.45px;width:1.57px;height:1.05px;background:repeating-linear-gradient(90deg,#8fce8f 0px,#8fce8f 1.5px,#dff0df 1.5px,#dff0df 2.3px)"></div>
<div class="b" style="left:981.00px;top:111.80px;width:10.50px;height:13.50px;background:repeating-linear-gradient(180deg,#a6a6a6 0px,#a6a6a6 1.05px,#e2e2e2 1.05px,#e2e2e2 1.56px)"></div>
<div class="b" style="left:981.00px;top:125.60px;width:10.50px;height:1.30px;background:#bdbdbd"></div>
<div class="b" style="left:981.00px;top:125.60px;width:1.57px;height:1.30px;background:#a0a0f0"></div>
<div class="b" style="left:981.00px;top:129.00px;width:8.92px;height:1.30px;background:#bdbdbd"></div>
<div class="b" style="left:981.00px;top:130.90px;width:1.05px;height:0.80px;background:#d0d0d0"></div>
<div class="b" style="left:981.00px;top:133.95px;width:10.50px;height:1.05px;background:repeating-linear-gradient(90deg,#8fce8f 0px,#8fce8f 1.5px,#dff0df 1.5px,#dff0df 2.3px)"></div>
<div class="b" style="left:981.00px;top:135.55px;width:1.57px;height:1.05px;background:repeating-linear-gradient(90deg,#8fce8f 0px,#8fce8f 1.5px,#dff0df 1.5px,#dff0df 2.3px)"></div>
<div class="b" style="left:981.00px;top:136.80px;width:10.50px;height:1.30px;background:#bdbdbd"></div>
<div class="b" style="left:981.00px;top:139.90px;width:10.50px;height:5.80px;background:repeating-linear-gradient(180deg,#a6a6a6 0px,#a6a6a6 1.05px,#e2e2e2 1.05px,#e2e2e2 1.56px)"></div>
<div class="b" style="left:981.00px;top:148.00px;width:10.50px;height:1.30px;background:#bdbdbd"></div>
<div class="b" style="left:981.00px;top:148.00px;width:1.57px;height:1.30px;background:#a0a0f0"></div>
<div class="b" style="left:981.00px;top:151.00px;width:8.92px;height:1.30px;background:#bdbdbd"></div>
<div class="b" style="left:981.00px;top:153.00px;width:1.05px;height:0.80px;background:#d0d0d0"></div>
<div class="b" style="left:981.00px;top:157.15px;width:1.05px;height:1.05px;background:repeating-linear-gradient(90deg,#8fce8f 0px,#8fce8f 1.5px,#dff0df 1.5px,#dff0df 2.3px)"></div>
<div class="b" style="left:981.00px;top:158.80px;width:3.67px;height:1.30px;background:#a0a0f0"></div>
<div class="b" style="left:981.00px;top:158.95px;width:10.50px;height:1.05px;background:repeating-linear-gradient(90deg,#8fce8f 0px,#8fce8f 1.5px,#dff0df 1.5px,#dff0df 2.3px)"></div>
<div class="b" style="left:981.00px;top:160.30px;width:3.15px;height:1.20px;background:#a0a0f0"></div>
<div class="b" style="left:981.00px;top:161.80px;width:4.73px;height:1.30px;background:#a0a0f0"></div>
<div class="b" style="left:981.00px;top:161.95px;width:10.50px;height:1.05px;background:repeating-linear-gradient(90deg,#8fce8f 0px,#8fce8f 1.5px,#dff0df 1.5px,#dff0df 2.3px)"></div>
<div class="b" style="left:981.00px;top:164.50px;width:10.50px;height:1.30px;background:#bdbdbd"></div>
<div class="b" style="left:981.00px;top:164.50px;width:3.15px;height:1.30px;background:#a0a0f0"></div>
<div class="b" style="left:981.00px;top:169.95px;width:10.50px;height:1.05px;background:repeating-linear-gradient(90deg,#8fce8f 0px,#8fce8f 1.5px,#dff0df 1.5px,#dff0df 2.3px)"></div>
<div class="b" style="left:981.00px;top:172.95px;width:10.50px;height:1.05px;background:repeating-linear-gradient(90deg,#8fce8f 0px,#8fce8f 1.5px,#dff0df 1.5px,#dff0df 2.3px)"></div>
<div class="b" style="left:981.00px;top:176.15px;width:10.50px;height:1.05px;background:repeating-linear-gradient(90deg,#8fce8f 0px,#8fce8f 1.5px,#dff0df 1.5px,#dff0df 2.3px)"></div>
<div class="b" style="left:981.00px;top:179.15px;width:10.50px;height:1.05px;background:repeating-linear-gradient(90deg,#8fce8f 0px,#8fce8f 1.5px,#dff0df 1.5px,#dff0df 2.3px)"></div>
<div class="b" style="left:981.00px;top:180.30px;width:10.50px;height:10.00px;background:repeating-linear-gradient(180deg,#a6a6a6 0px,#a6a6a6 1.05px,#e2e2e2 1.05px,#e2e2e2 1.56px)"></div>
<div class="b" style="left:981.00px;top:191.55px;width:10.50px;height:1.05px;background:repeating-linear-gradient(90deg,#8fce8f 0px,#8fce8f 1.5px,#dff0df 1.5px,#dff0df 2.3px)"></div>
<div class="b" style="left:981.00px;top:194.95px;width:10.50px;height:1.05px;background:repeating-linear-gradient(90deg,#8fce8f 0px,#8fce8f 1.5px,#dff0df 1.5px,#dff0df 2.3px)"></div>
<div class="b" style="left:981.00px;top:197.80px;width:1.05px;height:0.80px;background:#d0d0d0"></div>
<div class="b" style="left:981.00px;top:201.25px;width:1.05px;height:1.05px;background:repeating-linear-gradient(90deg,#8fce8f 0px,#8fce8f 1.5px,#dff0df 1.5px,#dff0df 2.3px)"></div>
<div class="b" style="left:981.00px;top:202.00px;width:3.67px;height:2.20px;background:#a0a0f0"></div>
<div class="b" style="left:981.00px;top:202.15px;width:10.50px;height:2.20px;background:repeating-linear-gradient(90deg,#8fce8f 0px,#8fce8f 1.5px,#dff0df 1.5px,#dff0df 2.3px)"></div>
<div class="b" style="left:981.00px;top:208.60px;width:10.50px;height:1.30px;background:#bdbdbd"></div>
<div class="b" style="left:981.00px;top:208.60px;width:3.15px;height:1.30px;background:#a0a0f0"></div>
<div class="b" style="left:981.00px;top:211.70px;width:8.92px;height:1.30px;background:#b5d5e3"></div>
<div class="b" style="left:981.00px;top:213.75px;width:10.50px;height:1.05px;background:repeating-linear-gradient(90deg,#8fce8f 0px,#8fce8f 1.5px,#dff0df 1.5px,#dff0df 2.3px)"></div>
<div class="b" style="left:981.00px;top:216.65px;width:10.50px;height:1.05px;background:repeating-linear-gradient(90deg,#8fce8f 0px,#8fce8f 1.5px,#dff0df 1.5px,#dff0df 2.3px)"></div>
<div class="b" style="left:981.00px;top:219.65px;width:10.50px;height:1.05px;background:repeating-linear-gradient(90deg,#8fce8f 0px,#8fce8f 1.5px,#dff0df 1.5px,#dff0df 2.3px)"></div>
<div class="b" style="left:981.00px;top:220.60px;width:10.50px;height:17.00px;background:#e6cdef"></div>
<div class="b" style="left:981.00px;top:240.15px;width:10.50px;height:1.05px;background:repeating-linear-gradient(90deg,#8fce8f 0px,#8fce8f 1.5px,#dff0df 1.5px,#dff0df 2.3px)"></div>
<div class="b" style="left:981.00px;top:241.50px;width:9.45px;height:1.30px;background:#bdbdbd"></div>
<div class="b" style="left:981.00px;top:244.25px;width:10.50px;height:1.05px;background:repeating-linear-gradient(90deg,#8fce8f 0px,#8fce8f 1.5px,#dff0df 1.5px,#dff0df 2.3px)"></div>
<div class="b" style="left:981.00px;top:245.90px;width:9.45px;height:1.20px;background:#bdbdbd"></div>
<div class="b" style="left:981.00px;top:249.25px;width:10.50px;height:1.05px;background:repeating-linear-gradient(90deg,#8fce8f 0px,#8fce8f 1.5px,#dff0df 1.5px,#dff0df 2.3px)"></div>
<div class="b" style="left:981.00px;top:250.90px;width:9.45px;height:1.20px;background:#bdbdbd"></div>
<div class="b" style="left:981.00px;top:254.05px;width:10.50px;height:1.05px;background:repeating-linear-gradient(90deg,#8fce8f 0px,#8fce8f 1.5px,#dff0df 1.5px,#dff0df 2.3px)"></div>
<div class="b" style="left:981.00px;top:255.50px;width:9.45px;height:1.20px;background:#bdbdbd"></div>
<div class="b" style="left:981.00px;top:258.45px;width:10.50px;height:1.05px;background:repeating-linear-gradient(90deg,#8fce8f 0px,#8fce8f 1.5px,#dff0df 1.5px,#dff0df 2.3px)"></div>
<div class="b" style="left:981.00px;top:259.90px;width:9.45px;height:1.20px;background:#bdbdbd"></div>
<div class="b" style="left:981.00px;top:263.45px;width:10.50px;height:1.05px;background:repeating-linear-gradient(90deg,#8fce8f 0px,#8fce8f 1.5px,#dff0df 1.5px,#dff0df 2.3px)"></div>
<div class="b" style="left:981.00px;top:265.00px;width:10.50px;height:8.00px;background:repeating-linear-gradient(180deg,#a6a6a6 0px,#a6a6a6 1.05px,#e2e2e2 1.05px,#e2e2e2 1.56px)"></div>
<div class="b" style="left:981.00px;top:275.35px;width:10.50px;height:1.05px;background:repeating-linear-gradient(90deg,#8fce8f 0px,#8fce8f 1.5px,#dff0df 1.5px,#dff0df 2.3px)"></div>
<div class="b" style="left:981.00px;top:276.80px;width:10.50px;height:5.40px;background:repeating-linear-gradient(180deg,#a6a6a6 0px,#a6a6a6 1.05px,#e2e2e2 1.05px,#e2e2e2 1.56px)"></div>
<div class="b" style="left:981.00px;top:285.35px;width:10.50px;height:1.05px;background:repeating-linear-gradient(90deg,#8fce8f 0px,#8fce8f 1.5px,#dff0df 1.5px,#dff0df 2.3px)"></div>
<div class="b" style="left:981.00px;top:286.50px;width:10.50px;height:8.50px;background:repeating-linear-gradient(180deg,#a6a6a6 0px,#a6a6a6 1.05px,#e2e2e2 1.05px,#e2e2e2 1.56px)"></div>
<div class="b" style="left:981.00px;top:297.65px;width:10.50px;height:1.05px;background:repeating-linear-gradient(90deg,#8fce8f 0px,#8fce8f 1.5px,#dff0df 1.5px,#dff0df 2.3px)"></div>
<div class="b" style="left:981.00px;top:299.00px;width:10.50px;height:8.50px;background:repeating-linear-gradient(180deg,#a6a6a6 0px,#a6a6a6 1.05px,#e2e2e2 1.05px,#e2e2e2 1.56px)"></div>
<div class="b" style="left:981.00px;top:310.25px;width:10.50px;height:1.05px;background:repeating-linear-gradient(90deg,#8fce8f 0px,#8fce8f 1.5px,#dff0df 1.5px,#dff0df 2.3px)"></div>
<div class="b" style="left:981.00px;top:314.80px;width:9.45px;height:1.30px;background:#bdbdbd"></div>
<div class="b" style="left:981.00px;top:318.50px;width:10.50px;height:8.00px;background:repeating-linear-gradient(180deg,#a6a6a6 0px,#a6a6a6 1.05px,#e2e2e2 1.05px,#e2e2e2 1.56px)"></div>
<div class="b" style="left:981.00px;top:329.05px;width:10.50px;height:1.05px;background:repeating-linear-gradient(90deg,#8fce8f 0px,#8fce8f 1.5px,#dff0df 1.5px,#dff0df 2.3px)"></div>
<div class="b" style="left:981.00px;top:330.20px;width:10.50px;height:8.30px;background:repeating-linear-gradient(180deg,#a6a6a6 0px,#a6a6a6 1.05px,#e2e2e2 1.05px,#e2e2e2 1.56px)"></div>
<div class="b" style="left:981.00px;top:341.45px;width:10.50px;height:1.05px;background:repeating-linear-gradient(90deg,#8fce8f 0px,#8fce8f 1.5px,#dff0df 1.5px,#dff0df 2.3px)"></div>
<div class="b" style="left:981.00px;top:344.30px;width:9.45px;height:1.30px;background:#bdbdbd"></div>
<div class="b" style="left:981.00px;top:346.80px;width:10.50px;height:3.40px;background:repeating-linear-gradient(180deg,#a6a6a6 0px,#a6a6a6 1.05px,#e2e2e2 1.05px,#e2e2e2 1.56px)"></div>
<div class="b" style="left:988.50px;top:189.50px;width:3.00px;height:1.20px;background:#e6cdef"></div>
<div class="b" style="left:988.50px;top:272.00px;width:3.00px;height:1.20px;background:#e6cdef"></div>
<div class="b" style="left:988.50px;top:281.50px;width:3.00px;height:1.20px;background:#e6cdef"></div>
<div class="b" style="left:988.50px;top:294.00px;width:3.00px;height:1.20px;background:#e6cdef"></div>
<div class="b" style="left:988.50px;top:306.50px;width:3.00px;height:1.20px;background:#e6cdef"></div>
<div class="b" style="left:988.50px;top:325.50px;width:3.00px;height:1.20px;background:#e6cdef"></div>
<div class="b" style="left:988.50px;top:337.50px;width:3.00px;height:1.20px;background:#e6cdef"></div>
<div class="b" style="left:992.00px;top:47.90px;width:0.60px;height:302.50px;background:#f7f7f7"></div>
<div class="b" style="left:992.30px;top:100.90px;width:6.70px;height:0.90px;background:#b0b0b0"></div>
<div class="b" style="left:221.60px;top:350.40px;width:777.40px;height:174.90px;background:#ffffff"></div>
<div class="b" style="left:221.60px;top:349.90px;width:777.40px;height:1.20px;background:#e2e2e2"></div>
<div class="b" style="left:221.60px;top:368.40px;width:777.40px;height:0.80px;background:#f3f3f3"></div>
<div class="t" style="left:232.20px;top:356.00px;font-size:6.3px;line-height:10px;color:#6f6f6f;font-weight:normal;font-family:'Liberation Sans',sans-serif;transform:scaleX(0.79);transform-origin:0 0;">PROBLEMS</div>
<div class="t" style="left:272.50px;top:356.00px;font-size:6.3px;line-height:10px;color:#424242;font-weight:normal;font-family:'Liberation Sans',sans-serif;transform:scaleX(0.79);transform-origin:0 0;">OUTPUT</div>
<div class="t" style="left:306.60px;top:356.00px;font-size:6.3px;line-height:10px;color:#6f6f6f;font-weight:normal;font-family:'Liberation Sans',sans-serif;transform:scaleX(0.79);transform-origin:0 0;">DEBUG CONSOLE</div>
<div class="t" style="left:363.30px;top:356.00px;font-size:6.3px;line-height:10px;color:#6f6f6f;font-weight:normal;font-family:'Liberation Sans',sans-serif;transform:scaleX(0.79);transform-origin:0 0;">TERMINAL</div>
<div class="t" style="left:403.10px;top:356.00px;font-size:6.3px;line-height:10px;color:#6f6f6f;font-weight:normal;font-family:'Liberation Sans',sans-serif;transform:scaleX(0.79);transform-origin:0 0;">PORTS</div>
<div class="t" style="left:431.70px;top:356.00px;font-size:6.3px;line-height:10px;color:#6f6f6f;font-weight:normal;font-family:'Liberation Sans',sans-serif;transform:scaleX(0.79);transform-origin:0 0;">MEMORY</div>
<div class="t" style="left:468.10px;top:356.00px;font-size:6.3px;line-height:10px;color:#6f6f6f;font-weight:normal;font-family:'Liberation Sans',sans-serif;transform:scaleX(0.79);transform-origin:0 0;">XRTOS</div>
<div class="t" style="left:497.50px;top:356.00px;font-size:6.3px;line-height:10px;color:#6f6f6f;font-weight:normal;font-family:'Liberation Sans',sans-serif;transform:scaleX(0.79);transform-origin:0 0;">SERIAL MONITOR</div>
<div class="b" style="left:271.90px;top:365.10px;width:22.90px;height:1.40px;background:#8f8f8f"></div>
<div class="b" style="left:623.30px;top:354.30px;width:207.00px;height:12.30px;background:#fff;border:0.7px solid #dedede;border-radius:1px;box-sizing:border-box"></div>
<div class="t" style="left:626.50px;top:356.00px;font-size:6.3px;line-height:10px;color:#8b8b8b;font-weight:normal;font-family:'Liberation Sans',sans-serif;transform:scaleX(0.9);transform-origin:0 0;">Filter</div>
<div class="b" style="left:833.50px;top:354.80px;width:88.00px;height:11.60px;background:#fff;border:0.7px solid #d6d6d6;border-radius:1.5px;box-sizing:border-box"></div>
<div class="t" style="left:837.80px;top:356.00px;font-size:6.6px;line-height:10px;color:#616161;font-weight:normal;font-family:'Liberation Sans',sans-serif;transform:scaleX(0.97);transform-origin:0 0;">CMake/Build</div>
<svg class="b" style="left:911.50px;top:359.10px;" width="5.00" height="3.00" viewBox="0 0 5 3"><path d="M0.3 0.4 L2.5 2.6 L4.7 0.4" stroke="#616161" stroke-width="0.6" fill="none"/></svg>
<svg class="b" style="left:925.10px;top:357.00px;" width="7.00" height="7.00" viewBox="0 0 7 7"><path d="M0.3 1 H6.7 M0.3 2.8 H6.7 M0.3 4.6 H4 M0.3 6.3 H4" stroke="#424242" stroke-width="0.9"/><rect x="4.6" y="4.3" width="2.2" height="2.4" fill="#424242"/></svg>
<svg class="b" style="left:937.50px;top:356.70px;" width="7.40" height="7.80" viewBox="0 0 7.4 7.8"><path d="M1.6 3.8 V2.4 Q1.6 0.4 3.7 0.4 Q5.8 0.4 5.8 2" fill="none" stroke="#424242" stroke-width="0.8"/><rect x="0.5" y="3.8" width="6.4" height="3.6" rx="0.6" fill="none" stroke="#424242" stroke-width="0.8"/></svg>
<svg class="b" style="left:950.00px;top:359.30px;" width="6.80" height="2.00" viewBox="0 0 6.800000000000001 2"><circle cx="0.80" cy="1" r="0.7" fill="#333333"/><circle cx="3.40" cy="1" r="0.7" fill="#333333"/><circle cx="6.00" cy="1" r="0.7" fill="#333333"/></svg>
<div class="b" style="left:963.20px;top:356.30px;width:0.60px;height:8.50px;background:#c8c8c8"></div>
<svg class="b" style="left:969.90px;top:357.00px;" width="7.00" height="7.00" viewBox="0 0 7 7"><path d="M0.4 2.2 V0.4 H2.2 M4.8 0.4 H6.6 V2.2 M6.6 4.8 V6.6 H4.8 M2.2 6.6 H0.4 V4.8" fill="none" stroke="#424242" stroke-width="0.8"/></svg>
<svg class="b" style="left:984.60px;top:358.30px;" width="4.40" height="4.40" viewBox="0 0 4.4 4.4"><path d="M0.3 0.3 L4.1 4.1 M4.1 0.3 L0.3 4.1" stroke="#333" stroke-width="0.8"/></svg>
<div class="code" style="left:232.5px;top:367.90px;font-size:7px;line-height:9.886px;color:#3f3f3f;letter-spacing:-0.194px;-webkit-text-stroke:0.1px #3f3f3f">[build] [24/33] Building C object cmake/stm32cubemx/CMakeFiles/STM32_Drivers.dir/__/__/Drivers/STM32F7xx_HAL_Driver/Src/stm32f7xx_hal_exti.c.obj</div>
<div class="code" style="left:232.5px;top:377.81px;font-size:7px;line-height:9.886px;color:#3f3f3f;letter-spacing:-0.194px;-webkit-text-stroke:0.1px #3f3f3f">[build] [25/33] Building C object cmake/stm32cubemx/CMakeFiles/STM32_Drivers.dir/__/__/Drivers/STM32F7xx_HAL_Driver/Src/stm32f7xx_ll_sdmmc.c.obj</div>
<div class="code" style="left:232.5px;top:387.72px;font-size:7px;line-height:9.886px;color:#3f3f3f;letter-spacing:-0.194px;-webkit-text-stroke:0.1px #3f3f3f">[build] [26/33] Building C object cmake/stm32cubemx/CMakeFiles/STM32_Drivers.dir/__/__/Drivers/STM32F7xx_HAL_Driver/Src/stm32f7xx_hal_mmc.c.obj</div>
<div class="code" style="left:232.5px;top:397.63px;font-size:7px;line-height:9.886px;color:#3f3f3f;letter-spacing:-0.194px;-webkit-text-stroke:0.1px #3f3f3f">[build] [27/33] Building C object cmake/stm32cubemx/CMakeFiles/STM32_Drivers.dir/__/__/Drivers/STM32F7xx_HAL_Driver/Src/stm32f7xx_hal_sd.c.obj</div>
<div class="code" style="left:232.5px;top:407.54px;font-size:7px;line-height:9.886px;color:#3f3f3f;letter-spacing:-0.194px;-webkit-text-stroke:0.1px #3f3f3f">[build] [28/33] Building C object cmake/stm32cubemx/CMakeFiles/STM32_Drivers.dir/__/__/Drivers/STM32F7xx_HAL_Driver/Src/stm32f7xx_hal_i2c.c.obj</div>
<div class="code" style="left:232.5px;top:417.45px;font-size:7px;line-height:9.886px;color:#3f3f3f;letter-spacing:-0.194px;-webkit-text-stroke:0.1px #3f3f3f">[build] [29/33] Building C object cmake/stm32cubemx/CMakeFiles/FatFs.dir/__/__/Middlewares/Third_Party/FatFs/src/diskio.c.obj</div>
<div class="code" style="left:232.5px;top:427.36px;font-size:7px;line-height:9.886px;color:#3f3f3f;letter-spacing:-0.194px;-webkit-text-stroke:0.1px #3f3f3f">[build] [30/33] Building C object cmake/stm32cubemx/CMakeFiles/FatFs.dir/__/__/Middlewares/Third_Party/FatFs/src/ff_gen_drv.c.obj</div>
<div class="code" style="left:232.5px;top:437.27px;font-size:7px;line-height:9.886px;color:#3f3f3f;letter-spacing:-0.194px;-webkit-text-stroke:0.1px #3f3f3f">[build] [31/33] Building C object cmake/stm32cubemx/CMakeFiles/FatFs.dir/__/__/Middlewares/Third_Party/FatFs/src/ff.c.obj</div>
<div class="code" style="left:232.5px;top:447.18px;font-size:7px;line-height:9.886px;color:#3f3f3f;letter-spacing:-0.194px;-webkit-text-stroke:0.1px #3f3f3f">[build] [32/33] Building C object cmake/stm32cubemx/CMakeFiles/FatFs.dir/__/__/Middlewares/Third_Party/FatFs/src/option/syscall.c.obj</div>
<div class="code" style="left:232.5px;top:457.09px;font-size:7px;line-height:9.886px;color:#3f3f3f;letter-spacing:-0.194px;-webkit-text-stroke:0.1px #3f3f3f">[build] [33/33] Linking C executable sdcardf746.elf</div>
<div class="code" style="left:232.5px;top:467.00px;font-size:7px;line-height:9.886px;color:#3f3f3f;letter-spacing:-0.194px;-webkit-text-stroke:0.1px #3f3f3f">[build] Memory region         Used Size  Region Size  %age Used</div>
<div class="code" style="left:232.5px;top:476.91px;font-size:7px;line-height:9.886px;color:#3f3f3f;letter-spacing:-0.194px;-webkit-text-stroke:0.1px #3f3f3f">[build]              RAM:        3280 B       320 KB      1.00%</div>
<div class="code" style="left:232.5px;top:486.82px;font-size:7px;line-height:9.886px;color:#3f3f3f;letter-spacing:-0.194px;-webkit-text-stroke:0.1px #3f3f3f">[build]            FLASH:       20940 B         1 MB      2.00%</div>
<div class="code" style="left:232.5px;top:496.73px;font-size:7px;line-height:9.886px;color:#3f3f3f;letter-spacing:-0.194px;-webkit-text-stroke:0.1px #3f3f3f">[driver] Build completed: 00:00:13.612</div>
<div class="code" style="left:232.5px;top:506.64px;font-size:7px;line-height:9.886px;color:#3f3f3f;letter-spacing:-0.194px;-webkit-text-stroke:0.1px #3f3f3f">[build] Build finished with exit code 0</div>
<div class="b" style="left:385.03px;top:507.84px;width:0.70px;height:7.60px;background:#111"></div>
<div class="b" style="left:992.20px;top:369.20px;width:0.60px;height:156.00px;background:#ececec"></div>
<div class="b" style="left:994.60px;top:376.00px;width:1.80px;height:1.80px;background:#9a9a9a"></div>
<div class="b" style="left:994.60px;top:388.60px;width:1.80px;height:1.80px;background:#9a9a9a"></div>
<div class="b" style="left:994.60px;top:401.60px;width:1.80px;height:1.80px;background:#9a9a9a"></div>
<div class="b" style="left:994.60px;top:408.60px;width:1.80px;height:1.80px;background:#9a9a9a"></div>
<div class="b" style="left:994.60px;top:414.00px;width:1.80px;height:1.80px;background:#9a9a9a"></div>
<div class="b" style="left:994.60px;top:424.00px;width:1.80px;height:1.80px;background:#9a9a9a"></div>
<div class="b" style="left:0.00px;top:525.70px;width:999.00px;height:11.30px;background:#007acc"></div>
<div class="b" style="left:0.00px;top:525.70px;width:17.80px;height:11.30px;background:#16825d"></div>
<svg class="b" style="left:5.60px;top:527.80px;" width="6.60" height="6.60" viewBox="0 0 6.6 6.6"><path d="M0.6 1 L2.8 3.2 L0.6 5.4 M6 1.2 L3.8 3.4 L6 5.6" stroke="#fff" stroke-width="0.8" fill="none" transform="rotate(-20 3.3 3.3)"/></svg>
<svg class="b" style="left:22.00px;top:528.00px;" width="7.00" height="7.00" viewBox="0 0 7 7"><circle cx="3.5" cy="3.5" r="2.9" fill="none" stroke="#fff" stroke-width="0.8"/><path d="M2.2 2.2 L4.8 4.8 M4.8 2.2 L2.2 4.8" stroke="#fff" stroke-width="0.75"/></svg>
<div class="t" style="left:30.60px;top:526.80px;font-size:6.7px;line-height:10px;color:#fff;font-weight:normal;font-family:'Liberation Sans',sans-serif;transform:scaleX(0.9);transform-origin:0 0;">0</div>
<svg class="b" style="left:36.00px;top:527.90px;" width="7.20" height="6.80" viewBox="0 0 7.2 6.8"><path d="M3.6 0.5 L6.8 6.3 H0.4 Z" fill="none" stroke="#fff" stroke-width="0.8" stroke-linejoin="round"/><path d="M3.6 2.4 V4.3 M3.6 4.9 V5.5" stroke="#fff" stroke-width="0.7"/></svg>
<div class="t" style="left:44.60px;top:526.80px;font-size:6.7px;line-height:10px;color:#fff;font-weight:normal;font-family:'Liberation Sans',sans-serif;transform:scaleX(0.9);transform-origin:0 0;">0</div>
<svg class="b" style="left:56.40px;top:527.60px;" width="7.60" height="7.60" viewBox="0 0 7.6 7.6"><circle cx="3.8" cy="3.8" r="2.55" fill="none" stroke="#fff" stroke-width="0.7"/><circle cx="3.8" cy="3.8" r="3.25" fill="none" stroke="#fff" stroke-width="0.9" stroke-dasharray="1.1 1.45"/><circle cx="3.8" cy="3.8" r="1.1" fill="none" stroke="#fff" stroke-width="0.6"/></svg>
<div class="t" style="left:65.60px;top:526.80px;font-size:6.7px;line-height:10px;color:#fff;font-weight:normal;font-family:'Liberation Sans',sans-serif;transform:scaleX(0.9);transform-origin:0 0;">Build</div>
<svg class="b" style="left:87.80px;top:527.60px;" width="7.40" height="7.40" viewBox="0 0 7.4 7.4"><path d="M2.3 2.4 Q3.7 0.6 5.1 2.4" fill="none" stroke="#fff" stroke-width="0.7"/><path d="M1.6 3 H5.8 V4.8 Q3.7 7.6 1.6 4.8 Z" fill="none" stroke="#fff" stroke-width="0.75"/><path d="M0.3 3.9 H1.6 M5.8 3.9 H7.1 M0.6 2 L1.7 2.8 M6.8 2 L5.7 2.8 M0.6 6 L1.8 5.3 M6.8 6 L5.6 5.3" stroke="#fff" stroke-width="0.6"/></svg>
<svg class="b" style="left:104.00px;top:527.90px;" width="6.00" height="6.80" viewBox="0 0 6 6.8"><path d="M0.6 0.5 L5.4 3.4 L0.6 6.3 Z" fill="none" stroke="#fff" stroke-width="0.8" stroke-linejoin="round"/></svg>
<div class="t" style="left:790.90px;top:526.80px;font-size:6.7px;line-height:10px;color:#fff;font-weight:normal;font-family:'Liberation Sans',sans-serif;transform:scaleX(0.9);transform-origin:0 0;">Ln 136, Col 55</div>
<div class="t" style="left:838.00px;top:526.80px;font-size:6.7px;line-height:10px;color:#fff;font-weight:normal;font-family:'Liberation Sans',sans-serif;transform:scaleX(0.9);transform-origin:0 0;">Spaces: 2</div>
<div class="t" style="left:871.60px;top:526.80px;font-size:6.7px;line-height:10px;color:#fff;font-weight:normal;font-family:'Liberation Sans',sans-serif;transform:scaleX(0.9);transform-origin:0 0;">UTF-8</div>
<div class="t" style="left:896.30px;top:526.80px;font-size:6.7px;line-height:10px;color:#fff;font-weight:normal;font-family:'Liberation Sans',sans-serif;transform:scaleX(0.9);transform-origin:0 0;">CRLF</div>
<svg class="b" style="left:919.40px;top:528.00px;" width="6.20" height="7.00" viewBox="0 0 6.2 7"><path d="M1.9 0.5 Q0.9 0.5 0.9 1.6 V2.6 Q0.9 3.5 0.3 3.5 Q0.9 3.5 0.9 4.4 V5.4 Q0.9 6.5 1.9 6.5 M4.3 0.5 Q5.3 0.5 5.3 1.6 V2.6 Q5.3 3.5 5.9 3.5 Q5.3 3.5 5.3 4.4 V5.4 Q5.3 6.5 4.3 6.5" fill="none" stroke="#fff" stroke-width="0.75"/></svg>
<div class="t" style="left:928.30px;top:526.80px;font-size:6.7px;line-height:10px;color:#fff;font-weight:normal;font-family:'Liberation Sans',sans-serif;transform:scaleX(0.9);transform-origin:0 0;">C</div>
<svg class="b" style="left:942.00px;top:527.90px;" width="8.00" height="6.80" viewBox="0 0 8 6.8"><path d="M0.9 3.6 Q0.9 0.5 4 0.5 Q7.1 0.5 7.1 3.6 V4.2 Q7.1 6.3 4 6.3 Q0.9 6.3 0.9 4.2 Z" fill="none" stroke="#fff" stroke-width="0.8"/><circle cx="2.8" cy="2.6" r="0.8" fill="#fff"/><circle cx="5.2" cy="2.6" r="0.8" fill="#fff"/><rect x="2.6" y="3.9" width="2.8" height="1.2" fill="#fff"/></svg>
<div class="b" style="left:952.20px;top:529.00px;width:27.20px;height:4.80px;border:0.75px solid #ffffff;border-radius:2.5px;box-sizing:border-box"></div>
<svg class="b" style="left:984.40px;top:527.60px;" width="7.20" height="7.40" viewBox="0 0 7.2 7.4"><path d="M1.3 5.2 V3.2 Q1.3 1 3.4 1 Q5.5 1 5.5 3.2 V5.2 L6.3 5.9 H0.5 Z M2.7 6.6 H4.1" fill="none" stroke="#fff" stroke-width="0.75"/><circle cx="5.6" cy="1.5" r="1.2" fill="#fff"/></svg>
</body></html>
